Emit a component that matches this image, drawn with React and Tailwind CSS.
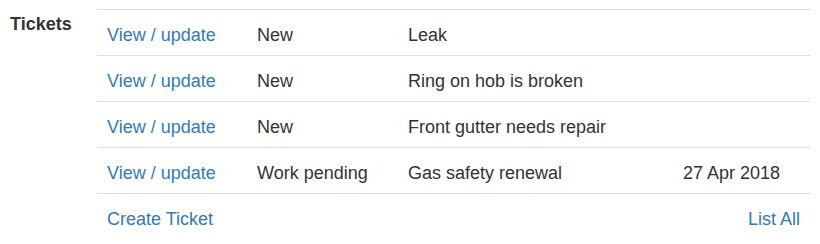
const TICKETS = [
  { status: 'New', title: 'Leak', date: '' },
  { status: 'New', title: 'Ring on hob is broken', date: '' },
  { status: 'New', title: 'Front gutter needs repair', date: '' },
  { status: 'Work pending', title: 'Gas safety renewal', date: '27 Apr 2018' },
]

export default function App() {
  return (
    <div className="w-[820px] h-[244px] bg-white text-[#333] text-[18px] font-['Liberation_Sans',Arial,sans-serif]">
      <div className="flex pt-[9px]">
        <div className="w-[97px] shrink-0 pl-[10px] pt-[4px]">
          <h4 className="text-[18px] font-bold leading-[22px]">Tickets</h4>
        </div>
        <div className="w-[713px]">
          {TICKETS.map((t, i) => (
            <div key={i} className="grid grid-cols-[150px_151px_275px_1fr] border-t border-[#ddd] leading-[23px]">
              <div className="px-[10px] pt-[14px] pb-[8px]">
                <a href="#" className="text-[#337ab7]">View / update</a>
              </div>
              <div className="px-[10px] pt-[14px] pb-[8px]">{t.status}</div>
              <div className="px-[10px] pt-[14px] pb-[8px]">{t.title}</div>
              <div className="px-[10px] pt-[14px] pb-[8px]">{t.date}</div>
            </div>
          ))}
          <div className="flex justify-between border-t border-[#ddd] px-[10px] pt-[14px] pb-[8px] leading-[23px]">
            <a href="#" className="text-[#337ab7]">Create Ticket</a>
            <a href="#" className="text-[#337ab7]">List All</a>
          </div>
        </div>
      </div>
    </div>
  )
}
